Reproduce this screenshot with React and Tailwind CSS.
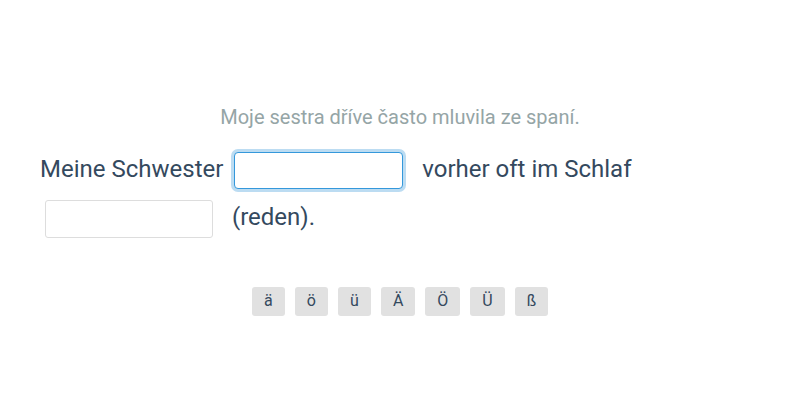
export default function App() {
  const chars = ['ä', 'ö', 'ü', 'Ä', 'Ö', 'Ü', 'ß'];

  return (
    <div className="w-[800px] h-[400px] bg-white font-['Roboto',sans-serif] pt-[103px] px-10">
      <p className="text-center text-[20px] leading-[28px] text-[#95a5a6]">
        Moje sestra dříve často mluvila ze spaní.
      </p>

      <div className="mt-[15px] text-[24px] leading-[46px] text-[#34495e]">
        Meine Schwester{' '}
        <input
          type="text"
          className="inline-block align-middle w-[169px] h-[37px] ml-[5px] mr-[13px] my-[5px] rounded-[4px] border border-[#3498db] ring-[3px] ring-[#bcdcf2] outline-none bg-white px-2 text-[20px]"
        />{' '}
        vorher oft im Schlaf{' '}
        <input
          type="text"
          className="inline-block align-middle w-[168px] h-[38px] ml-[5px] mr-[13px] my-[4px] rounded-[3px] border border-[#dddddd] outline-none bg-white px-2 text-[20px]"
        />{' '}
        (reden).
      </div>

      <div className="mt-[45px] flex justify-center gap-[10px]">
        {chars.map((c) => (
          <button
            key={c}
            className="h-[29px] min-w-[33px] px-3 rounded-[3px] bg-[#e1e1e1] text-[16px] text-[#34495e] leading-none"
          >
            {c}
          </button>
        ))}
      </div>
    </div>
  );
}
